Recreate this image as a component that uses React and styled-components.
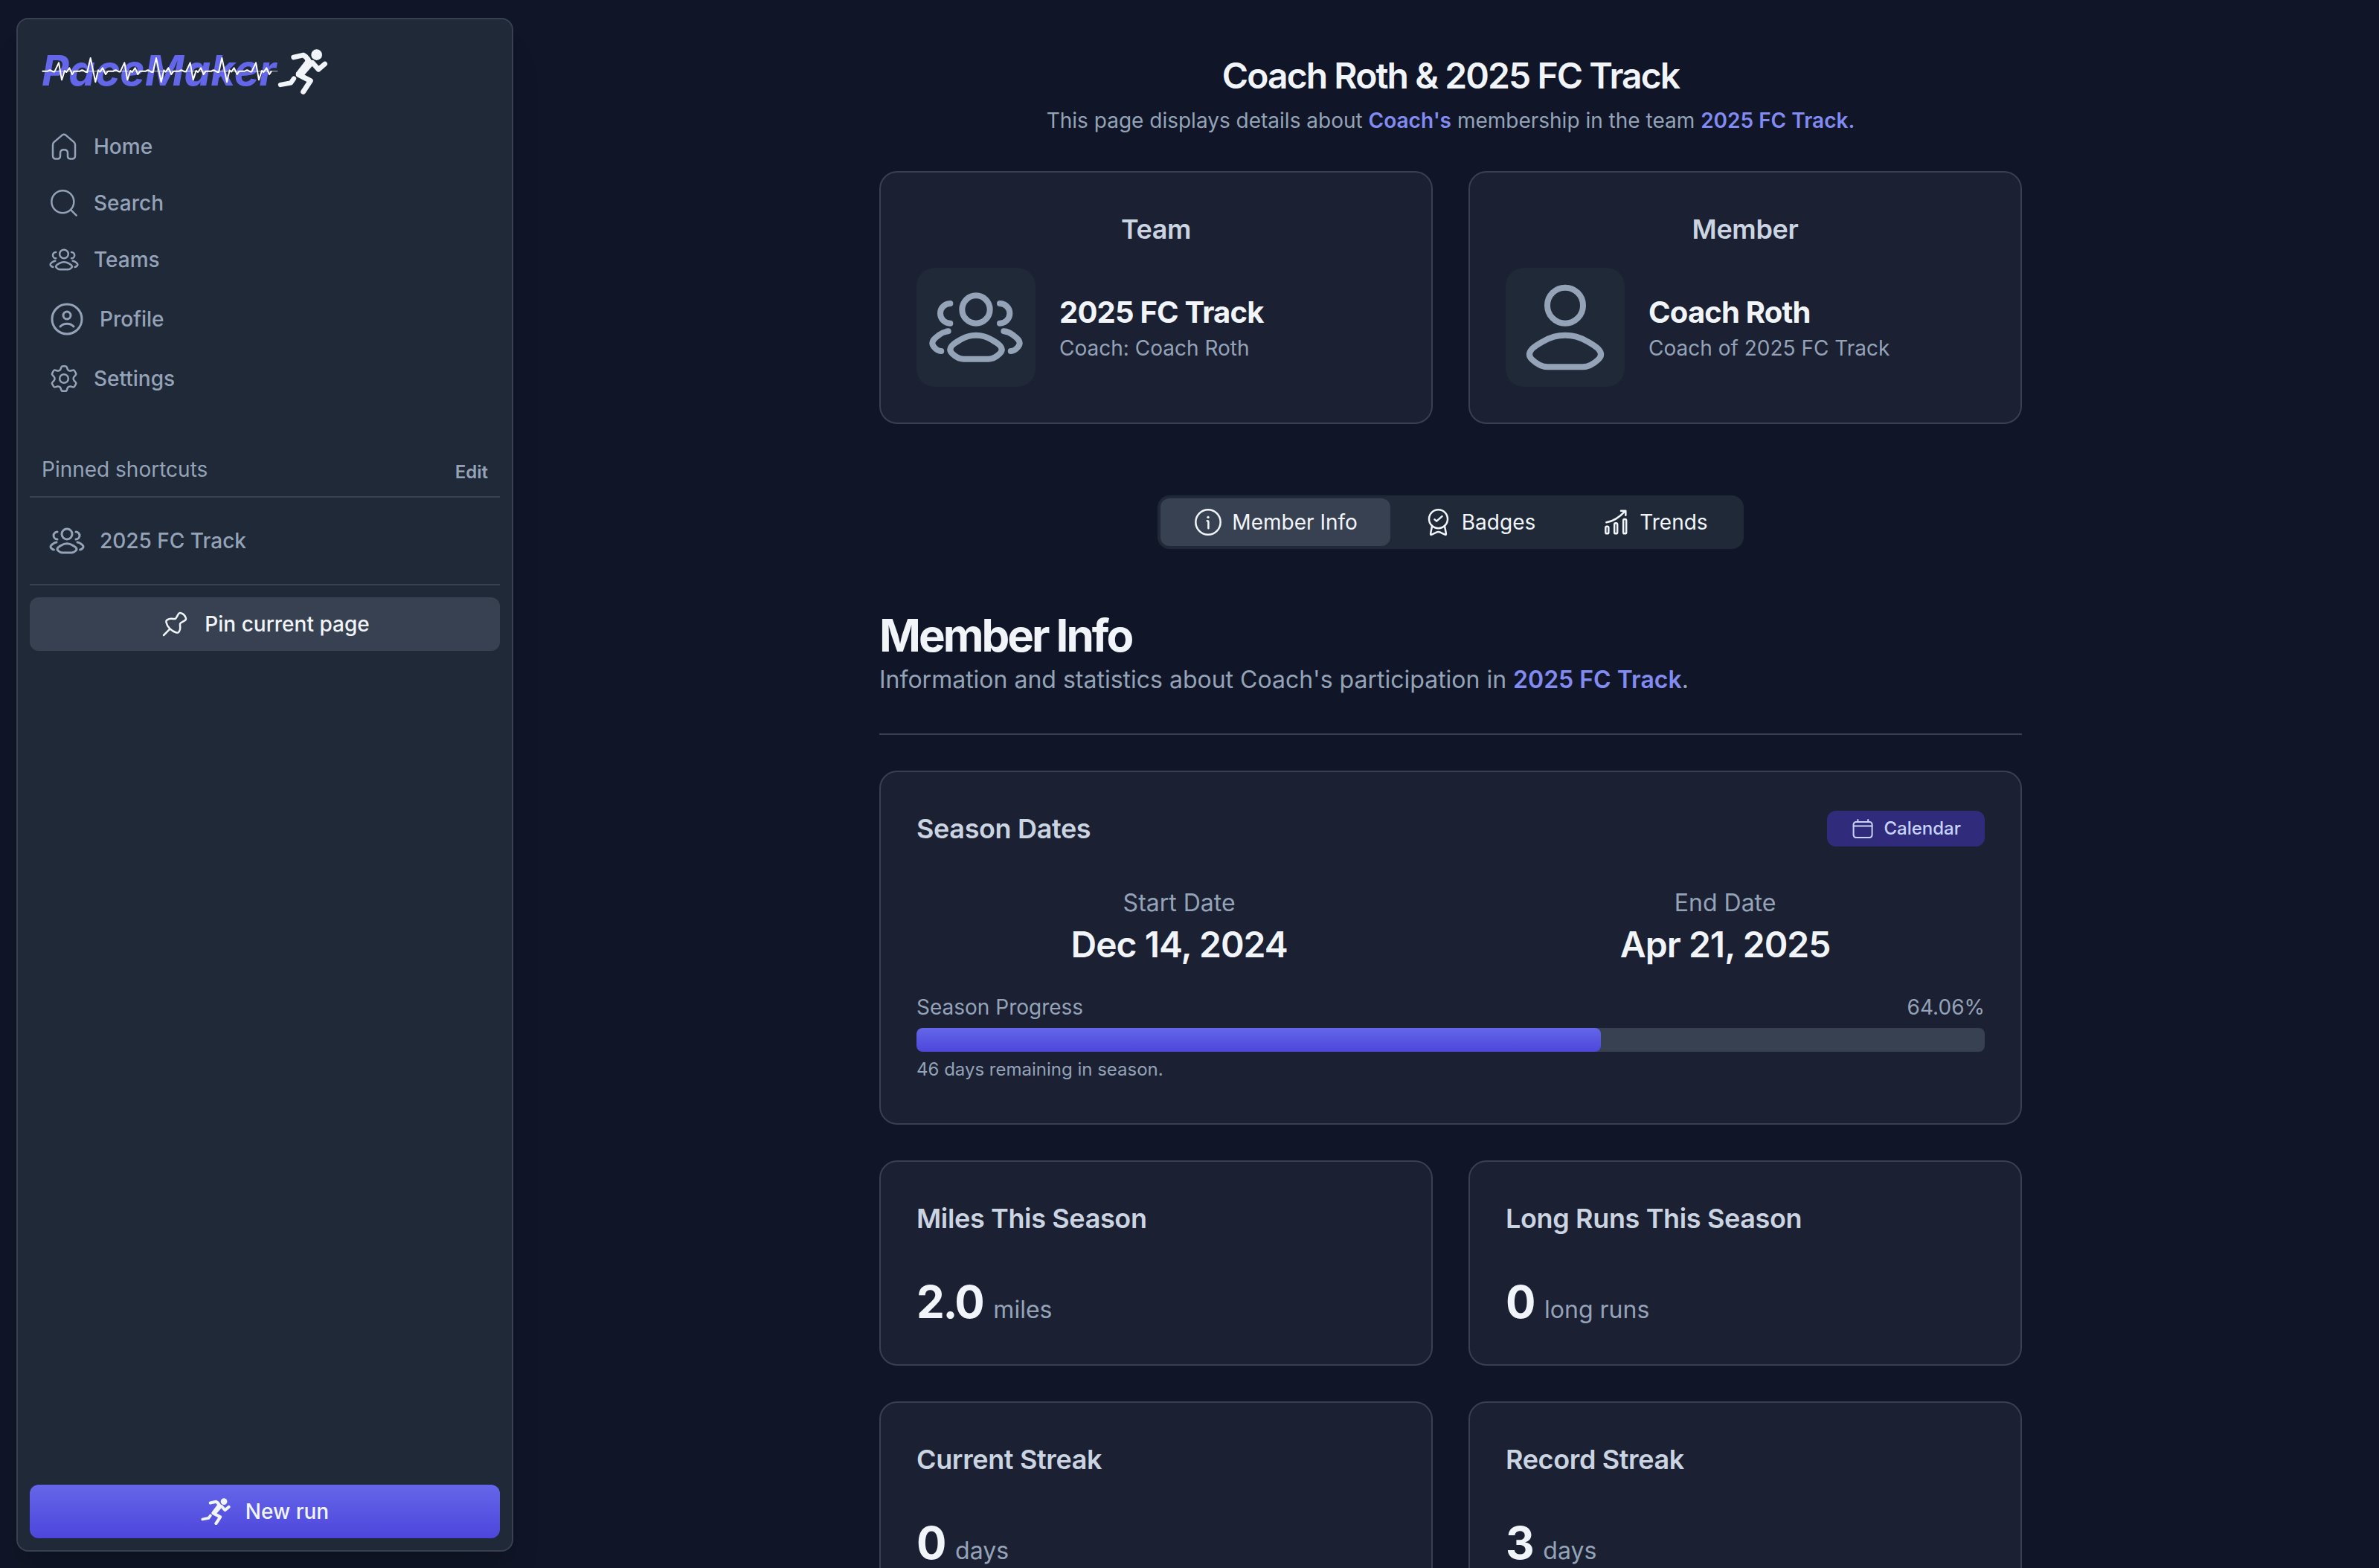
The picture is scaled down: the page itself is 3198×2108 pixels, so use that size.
import React from "react";
import styled, { createGlobalStyle } from "styled-components";

const c = {
  page: "#101627",
  card: "#1b2033",
  panel: "#202938",
  line: "#374151",
  strong: "#f1f5f9",
  heading: "#cbd5e1",
  muted: "#94a3b8",
  accent: "#828bf2",
  brand: "#6466e9",
};

const accentGradient = "linear-gradient(to bottom, #6466e9, #4e46dc)";

const GlobalStyle = createGlobalStyle`
  *, *::before, *::after { box-sizing: border-box; }
  body {
    margin: 0;
    background: ${c.page};
    color: ${c.strong};
    font-family: Inter, "Liberation Sans", sans-serif;
    font-size: 28px;
    line-height: 40px;
    overflow: hidden;
  }
  h1, h2, h3, p, ul, dl, dd { margin: 0; padding: 0; }
  ul { list-style: none; }
  a { color: inherit; text-decoration: none; }
  button { font: inherit; border: 0; cursor: pointer; }
  svg { display: block; flex: none; }
`;

/* ---------- Layout ---------- */

const Shell = styled.div`
  display: flex;
  height: 100vh;
  overflow: hidden;
`;

const Sidebar = styled.aside`
  display: flex;
  flex-direction: column;
  flex: none;
  width: 668px;
  margin: 24px 12px 22px 22px;
  padding: 16px;
  background: ${c.panel};
  border: 2px solid ${c.line};
  border-radius: 16px;
  box-shadow: 0 40px 50px -10px rgba(0, 0, 0, 0.1), 0 16px 20px -12px rgba(0, 0, 0, 0.1);
`;

const Main = styled.main`
  flex: 1;
  min-width: 0;
  padding: 70px 48px 0;
  overflow-x: hidden;
  overflow-y: auto;
  scrollbar-width: none;
`;

const Column = styled.div`
  display: flex;
  flex-direction: column;
  max-width: 1536px;
  margin: 0 auto;
  padding-bottom: 48px;
`;

/* ---------- Sidebar ---------- */

const Brand = styled.a`
  display: block;
  padding: 13px 0 0 10px;
`;

const Nav = styled.nav`
  display: flex;
  flex-direction: column;
  gap: 4px;
  margin-top: 26px;
`;

const NavLink = styled.a`
  display: flex;
  align-items: center;
  gap: 20px;
  padding: 16px 26px;
  color: ${c.muted};
  font-weight: 500;
`;

const PinnedHeader = styled.div`
  display: flex;
  align-items: center;
  justify-content: space-between;
  margin-top: 66px;
  padding: 0 16px 16px;
  color: ${c.muted};
`;

const PinnedTitle = styled.h2`
  font-size: 28px;
  font-weight: 400;
`;

const EditButton = styled.button`
  padding: 8px 0 0;
  background: none;
  color: ${c.muted};
  font-size: 24px;
  line-height: 32px;
  font-weight: 600;
`;

const PinnedList = styled.ul`
  padding: 18px 0;
  border: solid ${c.line};
  border-width: 2px 0;
`;

const WideButton = styled.button`
  display: flex;
  align-items: center;
  justify-content: center;
  gap: 20px;
  flex: none;
  height: 72px;
  border-radius: 12px;
  color: ${c.strong};
  font-weight: 500;
  background: ${(p) => (p.$primary ? accentGradient : c.line)};
  margin-top: ${(p) => (p.$primary ? "auto" : "16px")};
`;

/* ---------- Page content ---------- */

const PageHeader = styled.header`
  display: flex;
  flex-direction: column;
  gap: 8px;
  text-align: center;
`;

const PageTitle = styled.h1`
  font-size: 48px;
  line-height: 64px;
  font-weight: 600;
  letter-spacing: -0.04em;
`;

const Lead = styled.p`
  color: ${c.muted};
  font-size: ${(p) => (p.$large ? 32 : 28)}px;
  line-height: ${(p) => (p.$large ? 48 : 40)}px;
`;

const InlineLink = styled.a`
  && { color: ${c.accent}; }
  font-weight: 600;
`;

const Pair = styled.section`
  display: grid;
  grid-template-columns: 1fr 1fr;
  gap: 48px;
  margin-top: 48px;
`;

const Card = styled.article`
  padding: 48px;
  background: ${c.card};
  border: 2px solid ${c.line};
  border-radius: 24px;
`;

const CardTitle = styled.h3`
  color: ${c.heading};
  font-size: 36px;
  line-height: 56px;
  font-weight: 600;
  letter-spacing: -0.01em;
  text-align: ${(p) => (p.$center ? "center" : "left")};
`;

const Identity = styled.a`
  display: flex;
  align-items: center;
  gap: 32px;
  margin-top: 24px;
`;

const Tile = styled.span`
  display: grid;
  place-items: center;
  width: 160px;
  height: 160px;
  border-radius: 24px;
  background: ${c.panel};
  color: ${c.muted};
`;

const IdentityText = styled.span`
  display: flex;
  flex-direction: column;
`;

const Name = styled.strong`
  font-size: 40px;
  line-height: 56px;
  font-weight: 700;
  letter-spacing: -0.02em;
`;

const Detail = styled.span`
  color: ${c.muted};
`;

const Tabs = styled.div`
  display: flex;
  align-self: center;
  margin-top: 96px;
  padding: 4px;
  border-radius: 16px;
  background: ${c.panel};
`;

const Tab = styled.button`
  display: flex;
  align-items: center;
  gap: 12px;
  height: 64px;
  padding: 0 44px;
  border-radius: 12px;
  color: ${c.strong};
  background: ${(p) => (p["aria-selected"] ? c.line : "transparent")};
`;

const SectionHeader = styled.header`
  margin-top: 80px;
  padding-bottom: 48px;
  border-bottom: 2px solid ${c.line};
`;

const SectionTitle = styled.h2`
  font-size: 60px;
  line-height: 72px;
  font-weight: 700;
  letter-spacing: -0.05em;
`;

const SeasonCard = styled(Card)`
  margin-top: 48px;
  padding-bottom: 56px;
`;

const CardHeader = styled.div`
  display: flex;
  align-items: center;
  justify-content: space-between;
`;

const CalendarButton = styled.button`
  display: flex;
  align-items: center;
  gap: 12px;
  height: 48px;
  padding: 0 32px;
  border-radius: 12px;
  background: #302c7b;
  color: #c7d2fe;
  font-size: 24px;
  font-weight: 500;
`;

const Dates = styled.dl`
  display: flex;
  justify-content: space-around;
  gap: 32px;
  margin-top: 48px;
  text-align: center;
`;

const DateLabel = styled.dt`
  color: ${c.muted};
  font-size: 32px;
  line-height: 48px;
`;

const DateValue = styled.dd`
  font-size: 48px;
  line-height: 64px;
  font-weight: 600;
  letter-spacing: -0.02em;
`;

const Progress = styled.div`
  display: flex;
  flex-direction: column;
  gap: 8px;
  margin-top: 32px;
  color: ${c.muted};
`;

const ProgressTrack = styled.div`
  height: 32px;
  border-radius: 8px;
  background: ${c.line};
  overflow: hidden;
`;

const ProgressFill = styled.div`
  height: 100%;
  border-radius: 8px;
  background: ${accentGradient};
`;

const ProgressNote = styled.p`
  font-size: 24px;
  line-height: 32px;
`;

const Stat = styled.p`
  display: flex;
  align-items: baseline;
  gap: 14px;
  margin-top: 48px;
  color: ${c.muted};
  font-size: 32px;
  line-height: 32px;
`;

const StatValue = styled.strong`
  color: ${c.strong};
  font-size: 60px;
  line-height: 72px;
  font-weight: 700;
  letter-spacing: -0.04em;
`;

/* ---------- Icons ---------- */

const Icon = ({ size = 40, children }) => (
  <svg
    width={size}
    height={size}
    viewBox="0 0 24 24"
    fill="none"
    stroke="currentColor"
    strokeWidth="1.5"
    strokeLinecap="round"
    strokeLinejoin="round"
    aria-hidden="true"
  >
    {children}
  </svg>
);

const HomeIcon = () => (
  <Icon>
    <path d="M3 10.6V19.2C3 20.9 3.9 21.9 5.4 21.9H6.8C8.2 21.9 9 21 9 19.8V17.3C9 15.6 10.2 14.6 12 14.6S15 15.6 15 17.3V19.8C15 21 15.8 21.9 17.2 21.9H18.6C20.1 21.9 21 20.9 21 19.2V10.6C21 9.7 20.8 9.2 20.1 8.5L13.6 2.9C12.5 2 11.5 2 10.4 2.9L3.9 8.5C3.2 9.2 3 9.7 3 10.6Z" />
  </Icon>
);

const SearchIcon = () => (
  <Icon>
    <path d="M17.5 17.5L22 22" />
    <circle cx="11" cy="11" r="9" />
  </Icon>
);

const GroupIcon = ({ size }) => (
  <Icon size={size}>
    <path d="M20.774 18C21.5233 18 22.1193 17.5285 22.6545 16.8691C23.7499 15.5194 21.9513 14.4408 21.2654 13.9126C20.568 13.3756 19.7894 13.0714 19 13M18 11C19.3807 11 20.5 9.88071 20.5 8.5C20.5 7.11929 19.3807 6 18 6" />
    <path d="M3.22596 18C2.47666 18 1.88067 17.5285 1.34555 16.8691C0.250087 15.5194 2.04867 14.4408 2.73465 13.9126C3.43197 13.3756 4.21058 13.0714 5 13M5.5 11C4.11929 11 3 9.88071 3 8.5C3 7.11929 4.11929 6 5.5 6" />
    <path d="M8.0838 15.1112C7.06203 15.743 4.38299 17.0331 6.0147 18.6474C6.81178 19.436 7.69952 20 8.81563 20H15.1844C16.3005 20 17.1882 19.436 17.9853 18.6474C19.617 17.0331 16.938 15.743 15.9162 15.1112C13.5201 13.6296 10.4799 13.6296 8.0838 15.1112Z" />
    <circle cx="12" cy="7.5" r="3.5" />
  </Icon>
);

const UserIcon = ({ size }) => (
  <Icon size={size}>
    <path d="M6.57757 15.4816C5.1628 16.324 1.45336 18.0441 3.71266 20.1966C4.81631 21.248 6.04549 22 7.59087 22H16.4091C17.9545 22 19.1837 21.248 20.2873 20.1966C22.5466 18.0441 18.8372 16.324 17.4224 15.4816C14.1048 13.5061 9.89519 13.5061 6.57757 15.4816Z" />
    <circle cx="12" cy="6.5" r="4.5" />
  </Icon>
);

const ProfileIcon = () => (
  <Icon size={48}>
    <circle cx="12" cy="12" r="10" />
    <circle cx="12" cy="9.5" r="2.5" />
    <path d="M7.5 17C9.8317 14.5578 14.1432 14.4428 16.5 17" />
  </Icon>
);

const SettingsIcon = () => (
  <Icon>
    <circle cx="12" cy="12" r="3.5" />
    <path d="M21.3175 7.14139L20.8239 6.28479C20.4506 5.63696 20.264 5.31305 19.9464 5.18388C19.6288 5.05472 19.2696 5.15664 18.5513 5.36048L17.3311 5.70418C16.8725 5.80994 16.3913 5.74994 15.9726 5.53479L15.6357 5.34042C15.2766 5.11043 15.0004 4.77133 14.8475 4.37274L14.5136 3.37536C14.294 2.71534 14.1842 2.38533 13.9228 2.19657C13.6615 2.00781 13.3143 2.00781 12.6199 2.00781H11.5051C10.8108 2.00781 10.4636 2.00781 10.2022 2.19657C9.94085 2.38533 9.83106 2.71534 9.61149 3.37536L9.27753 4.37274C9.12465 4.77133 8.84845 5.11043 8.48937 5.34042L8.15249 5.53479C7.73374 5.74994 7.25259 5.80994 6.79398 5.70418L5.57375 5.36048C4.85541 5.15664 4.49625 5.05472 4.17867 5.18388C3.86109 5.31305 3.67445 5.63696 3.30115 6.28479L2.80757 7.14139C2.45766 7.74864 2.2827 8.05227 2.31666 8.37549C2.35061 8.69871 2.58483 8.95918 3.05326 9.48012L4.0843 10.6328C4.3363 10.9518 4.51521 11.5078 4.51521 12.0077C4.51521 12.5078 4.33636 13.0636 4.08433 13.3827L3.05326 14.5354C2.58483 15.0564 2.35062 15.3168 2.31666 15.6401C2.2827 15.9633 2.45766 16.2669 2.80757 16.8741L3.30114 17.7307C3.67443 18.3785 3.86109 18.7025 4.17867 18.8316C4.49625 18.9608 4.85542 18.8589 5.57377 18.655L6.79394 18.3113C7.25263 18.2055 7.73387 18.2656 8.15267 18.4808L8.4895 18.6752C8.84851 18.9052 9.12464 19.2442 9.2775 19.6428L9.61149 20.6403C9.83106 21.3003 9.94085 21.6303 10.2022 21.8191C10.4636 22.0078 10.8108 22.0078 11.5051 22.0078H12.6199C13.3143 22.0078 13.6615 22.0078 13.9228 21.8191C14.1842 21.6303 14.294 21.3003 14.5136 20.6403L14.8476 19.6428C15.0004 19.2442 15.2765 18.9052 15.6356 18.6752L15.9724 18.4808C16.3912 18.2656 16.8724 18.2055 17.3311 18.3113L18.5513 18.655C19.2696 18.8589 19.6288 18.9608 19.9464 18.8316C20.264 18.7025 20.4506 18.3785 20.8239 17.7307L21.3175 16.8741C21.6674 16.2669 21.8423 15.9633 21.8084 15.6401C21.7744 15.3168 21.5402 15.0564 21.0718 14.5354L20.0407 13.3827C19.7887 13.0636 19.6098 12.5078 19.6098 12.0077C19.6098 11.5078 19.7888 10.9518 20.0407 10.6328L21.0718 9.48012C21.5402 8.95918 21.7744 8.69871 21.8084 8.37549C21.8423 8.05227 21.6674 7.74864 21.3175 7.14139Z" />
  </Icon>
);

const PinIcon = () => (
  <Icon>
    <path d="M3 21L8 16" />
    <path d="M13.2585 18.8714C9.51516 18.0215 5.97844 14.4848 5.12853 10.7415C4.99399 10.1489 4.92672 9.85266 5.12161 9.37197C5.3165 8.89129 5.55457 8.74255 6.03071 8.44509C7.10705 7.77265 8.27254 7.55888 9.48209 7.66586C11.1793 7.81598 12.0279 7.89104 12.4512 7.67048C12.8746 7.44991 13.1622 6.93417 13.7376 5.90269L14.4664 4.59604C14.9465 3.73528 15.1866 3.3049 15.7513 3.10202C16.316 2.89913 16.6558 3.02199 17.3355 3.26771C18.9249 3.84236 20.1576 5.07505 20.7323 6.66449C20.978 7.34417 21.1009 7.68401 20.898 8.2487C20.6951 8.8134 20.2647 9.05346 19.4039 9.53358L18.0672 10.2792C17.0376 10.8534 16.5229 11.1406 16.3024 11.568C16.0819 11.9955 16.162 12.8256 16.3221 14.4859C16.4399 15.7068 16.2369 16.88 15.5555 17.9697C15.2577 18.4458 15.1088 18.6839 14.6283 18.8786C14.1477 19.0733 13.8513 19.006 13.2585 18.8714Z" />
  </Icon>
);

const InfoIcon = () => (
  <Icon>
    <circle cx="12" cy="12" r="10" />
    <path d="M12.2422 17V12C12.2422 11.5286 12.2422 11.2929 12.0957 11.1464C11.9493 11 11.7136 11 11.2422 11" />
    <path d="M11.992 8H12.001" strokeWidth="2" />
  </Icon>
);

const BadgeIcon = () => (
  <Icon>
    <circle cx="12.3" cy="9.4" r="7.5" />
    <path d="M9.3 9.8L10.9 11.2L15.3 7.3" />
    <path d="M7.2 15.3L6.4 19.3C6 21.5 5.9 22.4 6.6 22.1C7.8 21.8 10.8 19.8 12.3 19.8S16.8 21.8 18 22.1C18.7 22.4 18.6 21.5 18.2 19.3L17.4 15.3" />
  </Icon>
);

const TrendsIcon = () => (
  <Icon>
    <rect x="3.8" y="15.4" width="2.4" height="5.8" rx="1" />
    <rect x="10.9" y="12.8" width="2.4" height="8.4" rx="1" />
    <rect x="18.1" y="9.6" width="2.4" height="11.6" rx="1" />
    <path d="M4.4 12.2C10 11.3 15 8 19.4 3.2" />
    <path d="M16.2 2.8H20V6.4" />
  </Icon>
);

const CalendarIcon = () => (
  <svg width="32" height="32" viewBox="0 0 32 32" fill="none" stroke="currentColor" strokeWidth="2" strokeLinecap="round" aria-hidden="true">
    <rect x="3.6" y="7" width="25" height="21" rx="3.4" />
    <path d="M3.6 12.6H28.6M9.4 4V7M23.2 4V7" />
  </svg>
);

const RunnerFigure = () => (
  <g fill="currentColor" stroke="currentColor" strokeLinecap="round" strokeLinejoin="round">
    <circle cx="1127" cy="56" r="22" stroke="none" />
    <path d="M1084 60L1108 92L1068 138L1050 132L1088 82Z" strokeWidth="14" />
    <path d="M1034 66L1074 57L1092 74" fill="none" strokeWidth="20" />
    <path d="M1110 88L1134 115L1160 93" fill="none" strokeWidth="20" />
    <path d="M1054 136L1102 161L1073 205" fill="none" strokeWidth="21" />
    <path d="M981 177L1023 169L1035 152" fill="none" strokeWidth="19" />
  </g>
);

const RunnerIcon = () => (
  <svg width="40" height="36" viewBox="971 33 200 182" aria-hidden="true">
    <RunnerFigure />
  </svg>
);

const beat =
  "h22q10 -8 18 0q6 4 10 2L87 88L99 157L111 120L118 126L130 109L141 135L150 122H172q10 -8 18 0q6 5 12 4L215 69L235 166L246 118L253 125L264 109L276 135L285 122";

const Logo = () => (
  <svg width="400" height="80" viewBox="0 0 1200 240" role="img" aria-label="PaceMaker">
    <text x="18" y="179" fontFamily="Inter, sans-serif" fontSize="170" fontWeight="700" fontStyle="italic" fill={c.brand}>
      PaceMaker
    </text>
    <path d="M20 122H970" stroke={c.strong} strokeOpacity="0.6" strokeWidth="4" />
    <g fill="none" stroke="#ffffff" strokeWidth="6" strokeLinejoin="round">
      <path d={"M20 122" + beat} />
      <path d={"M20 122" + beat} transform="translate(265 0)" />
      <path d={"M20 122" + beat} transform="translate(530 0)" />
      <path d="M815 122h22q10 -8 18 0q6 4 10 2L882 88L894 157L906 120L913 126L925 109L936 135L945 122" />
    </g>
    <g color={c.strong}>
      <RunnerFigure />
    </g>
  </svg>
);

/* ---------- Data ---------- */

const navItems = [
  { label: "Home", icon: <HomeIcon /> },
  { label: "Search", icon: <SearchIcon /> },
  { label: "Teams", icon: <GroupIcon /> },
  { label: "Profile", icon: <ProfileIcon /> },
  { label: "Settings", icon: <SettingsIcon /> },
];

const people = [
  { title: "Team", name: "2025 FC Track", detail: "Coach: Coach Roth", icon: <GroupIcon size={128} /> },
  { title: "Member", name: "Coach Roth", detail: "Coach of 2025 FC Track", icon: <UserIcon size={128} /> },
];

const tabs = [
  { label: "Member Info", icon: <InfoIcon /> },
  { label: "Badges", icon: <BadgeIcon /> },
  { label: "Trends", icon: <TrendsIcon /> },
];

const statRows = [
  [
    { title: "Miles This Season", value: "2.0", unit: "miles" },
    { title: "Long Runs This Season", value: "0", unit: "long runs" },
  ],
  [
    { title: "Current Streak", value: "0", unit: "days" },
    { title: "Record Streak", value: "3", unit: "days" },
  ],
];

const progress = 64.06;

export default function App() {
  const [active, setActive] = React.useState("Member Info");

  return (
    <>
      <GlobalStyle />
      <Shell>
        <Sidebar>
          <Brand href="#">
            <Logo />
          </Brand>
          <Nav aria-label="Main">
            {navItems.map((item) => (
              <NavLink key={item.label} href="#">
                {item.icon}
                {item.label}
              </NavLink>
            ))}
          </Nav>
          <PinnedHeader>
            <PinnedTitle>Pinned shortcuts</PinnedTitle>
            <EditButton type="button">Edit</EditButton>
          </PinnedHeader>
          <PinnedList>
            <li>
              <NavLink href="#">
                <GroupIcon size={48} />
                2025 FC Track
              </NavLink>
            </li>
          </PinnedList>
          <WideButton type="button">
            <PinIcon />
            Pin current page
          </WideButton>
          <WideButton type="button" $primary>
            <RunnerIcon />
            New run
          </WideButton>
        </Sidebar>

        <Main>
          <Column>
            <PageHeader>
              <PageTitle>Coach Roth &amp; 2025 FC Track</PageTitle>
              <Lead>
                This page displays details about <InlineLink href="#">Coach's</InlineLink> membership in the team{" "}
                <InlineLink href="#">2025 FC Track.</InlineLink>
              </Lead>
            </PageHeader>

            <Pair>
              {people.map((p) => (
                <Card key={p.title}>
                  <CardTitle $center>{p.title}</CardTitle>
                  <Identity href="#">
                    <Tile>{p.icon}</Tile>
                    <IdentityText>
                      <Name>{p.name}</Name>
                      <Detail>{p.detail}</Detail>
                    </IdentityText>
                  </Identity>
                </Card>
              ))}
            </Pair>

            <Tabs role="tablist">
              {tabs.map((t) => (
                <Tab
                  key={t.label}
                  type="button"
                  role="tab"
                  aria-selected={active === t.label}
                  onClick={() => setActive(t.label)}
                >
                  {t.icon}
                  {t.label}
                </Tab>
              ))}
            </Tabs>

            <SectionHeader>
              <SectionTitle>Member Info</SectionTitle>
              <Lead $large>
                Information and statistics about Coach's participation in{" "}
                <InlineLink href="#">2025 FC Track</InlineLink>.
              </Lead>
            </SectionHeader>

            <SeasonCard>
              <CardHeader>
                <CardTitle>Season Dates</CardTitle>
                <CalendarButton type="button">
                  <CalendarIcon />
                  Calendar
                </CalendarButton>
              </CardHeader>
              <Dates>
                <div>
                  <DateLabel>Start Date</DateLabel>
                  <DateValue>Dec 14, 2024</DateValue>
                </div>
                <div>
                  <DateLabel>End Date</DateLabel>
                  <DateValue>Apr 21, 2025</DateValue>
                </div>
              </Dates>
              <Progress>
                <CardHeader>
                  <span id="season-progress">Season Progress</span>
                  <span>{progress}%</span>
                </CardHeader>
                <ProgressTrack
                  role="progressbar"
                  aria-labelledby="season-progress"
                  aria-valuenow={progress}
                  aria-valuemin={0}
                  aria-valuemax={100}
                >
                  <ProgressFill style={{ width: `${progress}%` }} />
                </ProgressTrack>
                <ProgressNote>46 days remaining in season.</ProgressNote>
              </Progress>
            </SeasonCard>

            {statRows.map((row) => (
              <Pair key={row[0].title}>
                {row.map((s) => (
                  <Card key={s.title}>
                    <CardTitle>{s.title}</CardTitle>
                    <Stat>
                      <StatValue>{s.value}</StatValue>
                      {s.unit}
                    </Stat>
                  </Card>
                ))}
              </Pair>
            ))}
          </Column>
        </Main>
      </Shell>
    </>
  );
}
